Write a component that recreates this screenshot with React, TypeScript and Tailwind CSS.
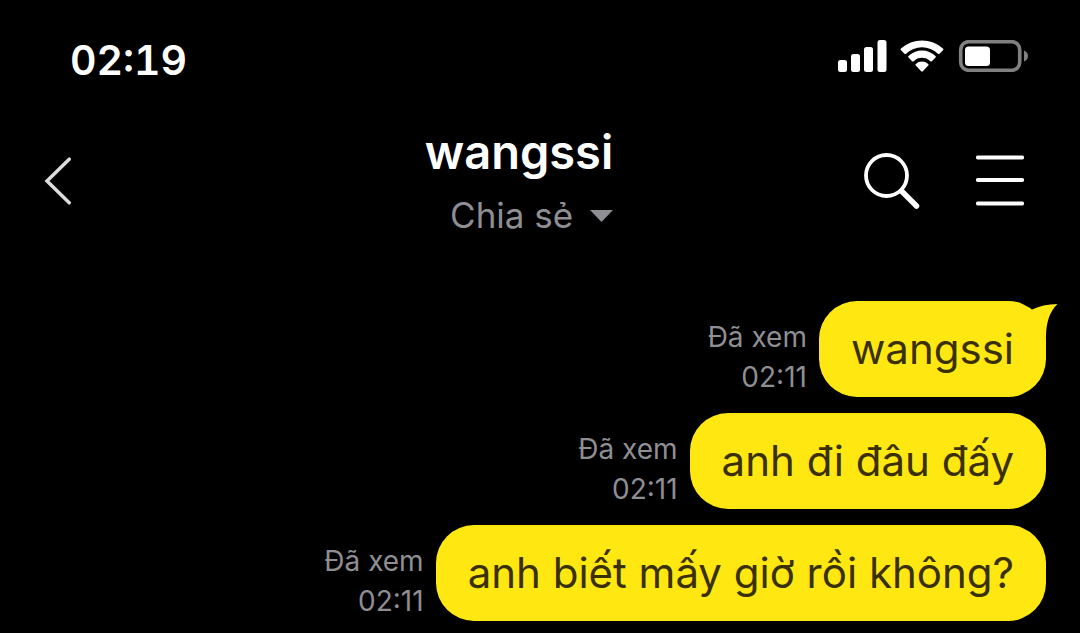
const messages = [
  { id: 1, text: "wangssi", time: "02:11", tail: true },
  { id: 2, text: "anh đi đâu đấy", time: "02:11", tail: false },
  { id: 3, text: "anh biết mấy giờ rồi không?", time: "02:11", tail: false },
];

function StatusBar() {
  return (
    <div className="flex items-start justify-between pt-8 pr-[52px] pl-[70px]">
      <time className="pt-px text-[41px] leading-[54px] font-semibold tabular-nums">02:19</time>
      <div className="flex items-center gap-3 pt-2">
        <svg width="50" height="32" viewBox="0 0 50 32" fill="currentColor">
          <rect x="0" y="20" width="9" height="12" rx="2.5" />
          <rect x="13" y="14" width="9" height="18" rx="2.5" />
          <rect x="26" y="7" width="9" height="25" rx="2.5" />
          <rect x="39.5" y="0" width="9" height="32" rx="2.5" />
        </svg>
        <svg width="44" height="32" viewBox="0 0 44 32" fill="currentColor">
          <path d="M1 8.600a31 31 0 0 1 42 0q.8.800 0 1.600l-3.500 3.500q-.8.800-1.600 0a23 23 0 0 0-31.800 0q-.8.800-1.600 0L1 10.200q-.8-.8 0-1.600Z" />
          <path d="M8.500 16a19.500 19.500 0 0 1 27 0q.8.800 0 1.600l-3.600 3.600q-.8.800-1.600 0a12 12 0 0 0-16.600 0q-.8.800-1.600 0l-3.600-3.600q-.8-.8 0-1.600Z" />
          <path d="M15.800 24a9 9 0 0 1 12.400 0q.8.800 0 1.600l-5.400 5.700q-.8.800-1.600 0l-5.400-5.700q-.8-.8 0-1.600Z" />
        </svg>
        <svg width="72" height="32" viewBox="0 0 72 32">
          <rect x="4.700" y="1.700" width="59" height="28.600" rx="8" fill="none" stroke="#808080" strokeWidth="3.600" />
          <rect x="9" y="6.500" width="25" height="19.500" rx="3.500" fill="#fff" />
          <path d="M68 10.500q4 1.500 4 5.500t-4 5.500Z" fill="#808080" />
        </svg>
      </div>
    </div>
  );
}

function ChatHeader() {
  return (
    <header className="grid grid-cols-[1fr_auto_1fr] items-center pt-[34px] pr-14 pl-11">
      <button type="button" aria-label="Back" className="justify-self-start pb-1.5">
        <svg width="28" height="48" viewBox="0 0 28 48" fill="none" stroke="#dcdcdc" strokeWidth="3.500" strokeLinecap="round">
          <path d="M25.200 2.200 3 24l22.200 21.800" />
        </svg>
      </button>
      <div className="flex flex-col items-end pr-[30px]">
        <h1 className="text-[47px] leading-[62px] font-semibold">wangssi</h1>
        <button type="button" className="flex items-center gap-4 text-[35px] leading-[64px] text-[#8e8e93]">
          Chia sẻ
          <svg width="24" height="16" viewBox="0 0 24 16" fill="currentColor">
            <path d="M1 3h23L12.500 15Z" />
          </svg>
        </button>
      </div>
      <div className="flex items-center gap-14 justify-self-end pb-1.5">
        <button type="button" aria-label="Search">
          <svg width="56" height="56" viewBox="0 0 56 56" fill="none" stroke="currentColor" strokeLinecap="round">
            <circle cx="22.5" cy="22.5" r="20.5" strokeWidth="3.800" />
            <path d="M38 38.500 52.500 53" strokeWidth="5.500" />
          </svg>
        </button>
        <button type="button" aria-label="Menu">
          <svg width="48" height="52" viewBox="0 0 48 52" fill="none" stroke="currentColor" strokeWidth="4.200" strokeLinecap="round">
            <path d="M2 2.500h44M2 25h44M2 48.500h44" />
          </svg>
        </button>
      </div>
    </header>
  );
}

export default function App() {
  return (
    <div className="min-h-screen bg-black font-['Inter',sans-serif] text-white">
      <StatusBar />
      <ChatHeader />
      <main className="flex flex-col gap-4 pt-[54px] pr-[34px] pb-3 pl-8">
        {messages.map((message) => (
          <div key={message.id} className="flex items-end justify-end gap-3">
            <div className="shrink-0 text-right text-[28px] leading-10 text-[#8e8e93]">
              <p>Đã xem</p>
              <time>{message.time}</time>
            </div>
            <div className="relative rounded-[38px] bg-[#ffe812] px-8 py-[18px] text-[42px] leading-[60px] text-[#3a3000]">
              {message.text}
              {message.tail && (
                <svg className="absolute top-0 -right-3 text-[#ffe812]" width="48" height="48" viewBox="0 0 48 48" fill="currentColor">
                  <path d="M12 20 21 9Q33 3 47.500 3 36 14 36 36L20 40Z" />
                </svg>
              )}
            </div>
          </div>
        ))}
      </main>
    </div>
  );
}
